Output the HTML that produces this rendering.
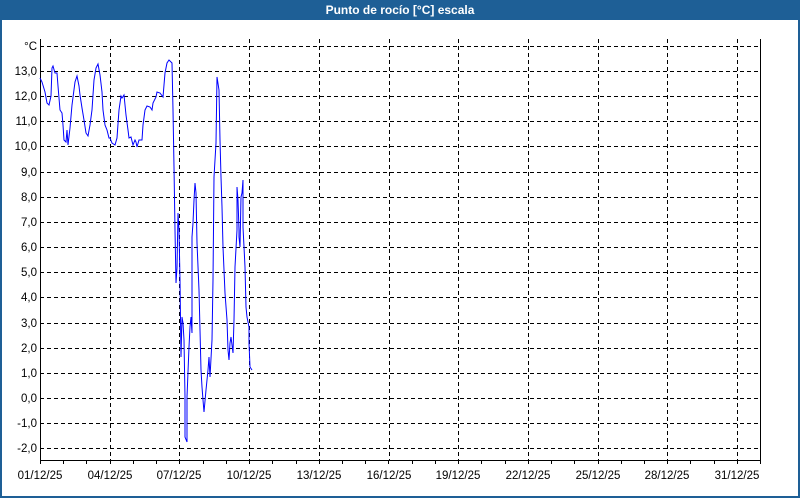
<!DOCTYPE html>
<html><head><style>
body{margin:0;width:800px;height:500px;overflow:hidden;background:#fff;font-family:"Liberation Sans",sans-serif}
#f{position:absolute;left:0;top:0;width:796px;height:496px;border:2px solid #1e5f96;border-top:none;}
#t{position:absolute;left:0;top:0;width:800px;height:20px;background:#1e5f96;color:#fff;font-weight:bold;font-size:12px;text-align:center;line-height:20px}
</style></head><body>
<div id="f"></div>
<div id="t">Punto de rocío [°C] escala</div>
<svg width="800" height="500" style="position:absolute;left:0;top:0" font-size="11.5" font-family="'Liberation Sans',sans-serif">
<g stroke="#000" stroke-dasharray="4,3" stroke-width="1">
<line x1="40" x2="760" y1="46.5" y2="46.5"/><line x1="40" x2="760" y1="71.5" y2="71.5"/><line x1="40" x2="760" y1="96.5" y2="96.5"/><line x1="40" x2="760" y1="121.5" y2="121.5"/><line x1="40" x2="760" y1="146.5" y2="146.5"/><line x1="40" x2="760" y1="172.5" y2="172.5"/><line x1="40" x2="760" y1="197.5" y2="197.5"/><line x1="40" x2="760" y1="222.5" y2="222.5"/><line x1="40" x2="760" y1="247.5" y2="247.5"/><line x1="40" x2="760" y1="272.5" y2="272.5"/><line x1="40" x2="760" y1="297.5" y2="297.5"/><line x1="40" x2="760" y1="323.5" y2="323.5"/><line x1="40" x2="760" y1="348.5" y2="348.5"/><line x1="40" x2="760" y1="373.5" y2="373.5"/><line x1="40" x2="760" y1="398.5" y2="398.5"/><line x1="40" x2="760" y1="423.5" y2="423.5"/><line x1="40" x2="760" y1="448.5" y2="448.5"/>
<line y1="39" y2="460" x1="110.5" x2="110.5"/><line y1="39" y2="460" x1="179.5" x2="179.5"/><line y1="39" y2="460" x1="249.5" x2="249.5"/><line y1="39" y2="460" x1="319.5" x2="319.5"/><line y1="39" y2="460" x1="389.5" x2="389.5"/><line y1="39" y2="460" x1="458.5" x2="458.5"/><line y1="39" y2="460" x1="528.5" x2="528.5"/><line y1="39" y2="460" x1="598.5" x2="598.5"/><line y1="39" y2="460" x1="667.5" x2="667.5"/><line y1="39" y2="460" x1="737.5" x2="737.5"/>
</g>
<path d="M40.5 39V460.5H760.5V39" fill="none" stroke="#000"/>
<g stroke="#000" id="tk"></g>
<polyline fill="none" stroke="#0000ff" stroke-width="1" points="40,78 42,82 45,92 47,103 49,105 51,96 52,68 53,66 55,73 57,73 58,86 60,110 62,113 63,125 64,140 66,142 67,130 68,145 70,128 72,105 75,82 77,76 79,86 80,95 82,108 84,120 86,133 88,136 90,125 92,110 94,80 96,68 98,64 100,75 102,92 103,110 105,125 107,130 109,138 110,138 112,143 115,145 117,138 119,110 121,96 122,98 124,95 126,115 128,130 129,138 131,137 133,145 135,140 136,142 137,147 139,140 142,140 143,125 145,110 147,106 150,107 152,110 153,103 156,97 157,92 160,93 163,97 165,73 167,63 169,60 172,63 173,110 174,167 175,230 176,283 177,268 178,213 179,230 180,280 181,357 182,317 183,323 184,340 185,397 185,437 187,442 187,397 189,347 190,327 191,317 192,333 192,237 193,223 194,200 195,183 196,193 197,243 199,290 201,370 202,387 203,400 204,412 206,390 208,370 209,357 210,377 212,340 213,280 214,177 216,143 217,77 219,90 220,140 221,177 222,207 223,247 225,293 227,320 228,350 229,360 230,343 231,337 233,353 234,320 235,267 237,230 237,187 238,200 239,230 239,237 240,247 241,197 242,193 243,180 243,227 245,267 246,307 247,317 249,327 249,343 250,367 252,370"/>
<g fill="#000" text-anchor="end">
<text x="37" y="50">°C</text><text x="37" y="75">13,0</text><text x="37" y="100">12,0</text><text x="37" y="125">11,0</text><text x="37" y="150">10,0</text><text x="37" y="176">9,0</text><text x="37" y="201">8,0</text><text x="37" y="226">7,0</text><text x="37" y="251">6,0</text><text x="37" y="276">5,0</text><text x="37" y="301">4,0</text><text x="37" y="327">3,0</text><text x="37" y="352">2,0</text><text x="37" y="377">1,0</text><text x="37" y="402">0,0</text><text x="37" y="427">-1,0</text><text x="37" y="452">-2,0</text>
</g>
<g fill="#000" text-anchor="middle">
<text x="40" y="479">01/12/25</text><text x="110" y="479">04/12/25</text><text x="179" y="479">07/12/25</text><text x="249" y="479">10/12/25</text><text x="319" y="479">13/12/25</text><text x="389" y="479">16/12/25</text><text x="458" y="479">19/12/25</text><text x="528" y="479">22/12/25</text><text x="598" y="479">25/12/25</text><text x="667" y="479">28/12/25</text><text x="737" y="479">31/12/25</text>
</g>
</svg>
<script>
var g=document.getElementById('tk'),s='';
for(var i=0;i<=31;i++){var x=Math.round(40+i*23.23)+0.5;s+='<line x1="'+x+'" x2="'+x+'" y1="460" y2="464"/>';}
g.innerHTML=s;
</script>
</body></html>
